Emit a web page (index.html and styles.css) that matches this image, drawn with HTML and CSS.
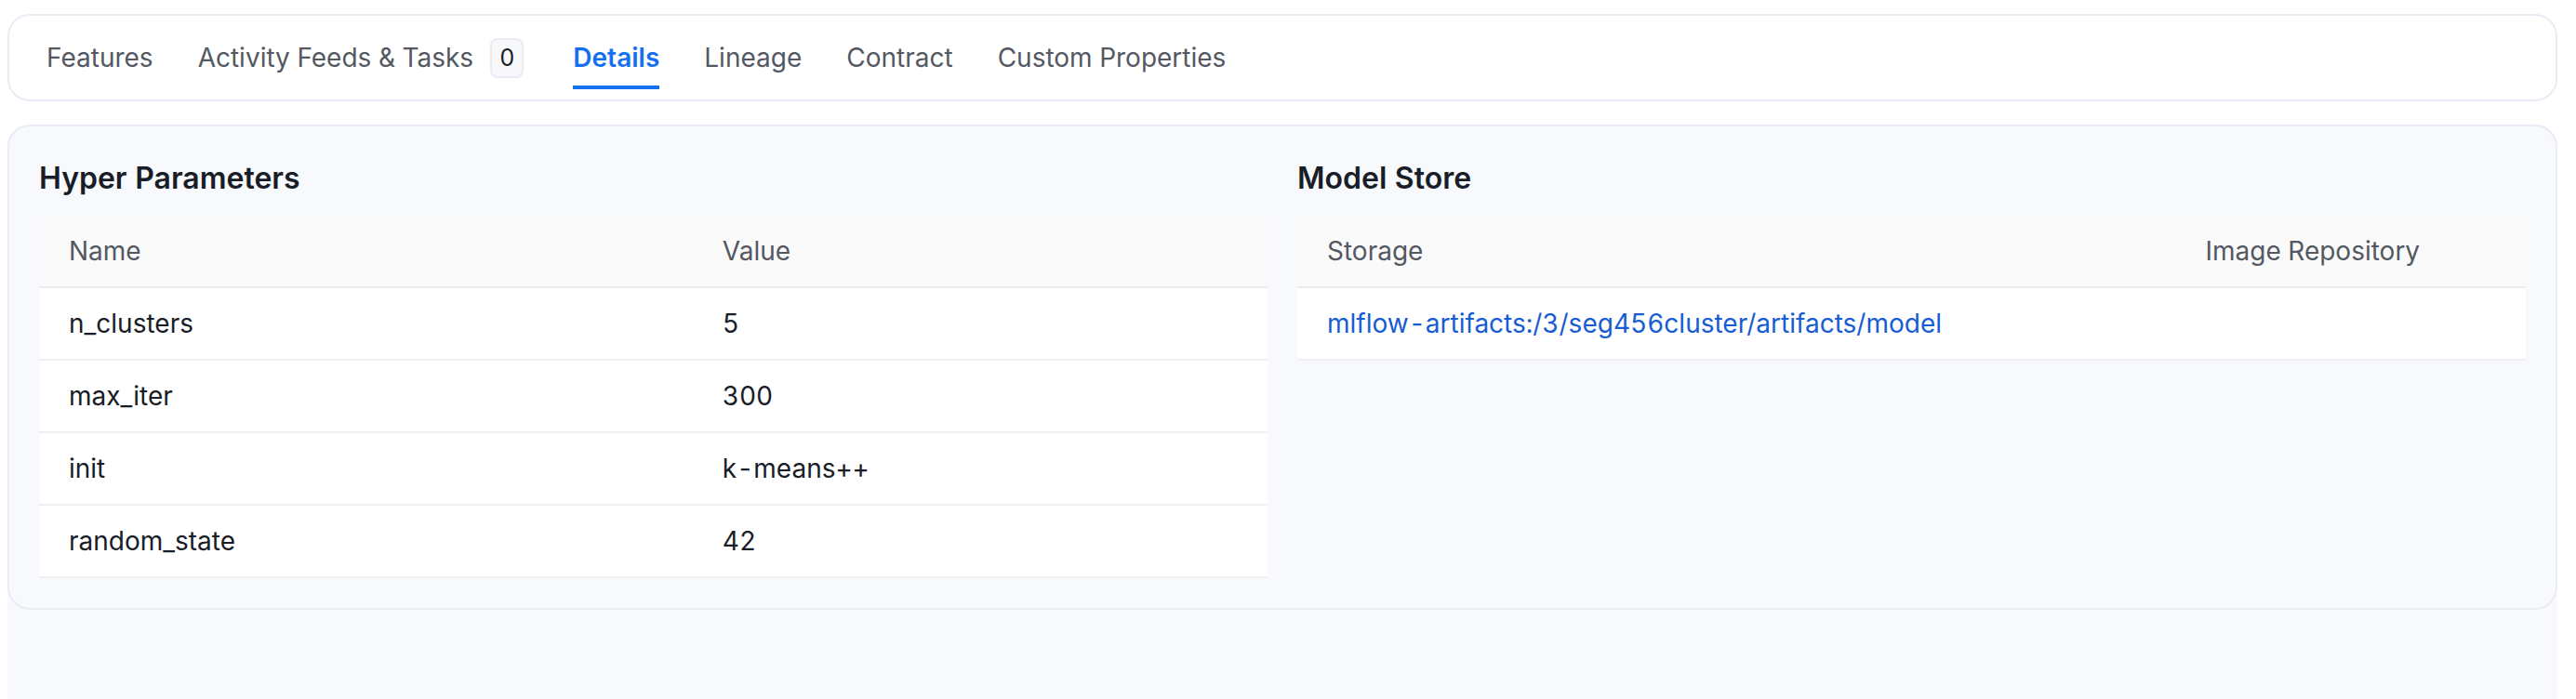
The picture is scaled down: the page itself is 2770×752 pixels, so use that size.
FILE: index.html
```html
<!DOCTYPE html>
<html lang="en">
<head>
<meta charset="utf-8">
<title>Model Details</title>
<link rel="stylesheet" href="styles.css">
</head>
<body>
<div class="page">
  <nav class="tabs">
    <div class="tab">Features</div>
    <div class="tab">Activity Feeds &amp; Tasks <span class="badge">0</span></div>
    <div class="tab active">Details</div>
    <div class="tab">Lineage</div>
    <div class="tab">Contract</div>
    <div class="tab">Custom Properties</div>
  </nav>
  <main class="content">
    <section class="card">
      <div class="panel">
        <h3 class="panel-title">Hyper Parameters</h3>
        <table class="data-table">
          <colgroup><col class="col-name"><col></colgroup>
          <thead>
            <tr><th>Name</th><th>Value</th></tr>
          </thead>
          <tbody>
            <tr><td>n_clusters</td><td>5</td></tr>
            <tr><td>max_iter</td><td>300</td></tr>
            <tr><td>init</td><td>k-means++</td></tr>
            <tr><td>random_state</td><td>42</td></tr>
          </tbody>
        </table>
      </div>
      <div class="panel">
        <h3 class="panel-title">Model Store</h3>
        <table class="data-table">
          <colgroup><col class="col-storage"><col></colgroup>
          <thead>
            <tr><th>Storage</th><th>Image Repository</th></tr>
          </thead>
          <tbody>
            <tr><td><a class="link" href="#">mlflow-artifacts:/3/seg456cluster/artifacts/model</a></td><td></td></tr>
          </tbody>
        </table>
      </div>
    </section>
  </main>
</div>
</body>
</html>
```

FILE: styles.css
```css
html, body {
  margin: 0;
  padding: 0;
  background: #ffffff;
}

body {
  font-family: Inter, "Noto Sans", sans-serif;
  font-feature-settings: "tnum";
  font-variant: tabular-nums;
}

.page {
  height: 100vh;
  box-sizing: border-box;
  padding: 15px 20px 0 8px;
  display: flex;
  flex-direction: column;
  gap: 25px;
}

.tabs {
  flex: none;
  height: 94px;
  box-sizing: border-box;
  border: 2px solid #eaecf5;
  border-radius: 24px;
  background: #ffffff;
  display: flex;
  align-items: center;
  padding-left: 40px;
  gap: 48px;
}

.tab {
  height: 68px;
  box-sizing: border-box;
  padding-top: 4px;
  border-bottom: 4px solid transparent;
  display: flex;
  align-items: center;
  gap: 18px;
  font-size: 28px;
  color: #535862;
  white-space: nowrap;
}

.tab.active {
  color: #1570ef;
  font-weight: 600;
  border-bottom-color: #1570ef;
}

.badge {
  box-sizing: border-box;
  height: 43px;
  min-width: 35px;
  padding: 0 8px;
  margin-right: 5px;
  border: 2px solid #eaecf5;
  border-radius: 8px;
  background: #f8f8fa;
  color: #181d27;
  font-size: 25px;
  display: flex;
  align-items: center;
  justify-content: center;
}

.content {
  flex: 1;
  background: #f8f9fc;
  border-radius: 24px 24px 0 0;
}

.card {
  border: 2px solid #eaecf5;
  border-radius: 24px;
  padding: 32px;
  display: grid;
  grid-template-columns: 1fr 1fr;
  gap: 32px;
}

.panel-title {
  margin: 0 0 16px;
  font-size: 32px;
  line-height: 48px;
  font-weight: 600;
  color: #181d27;
}

.data-table {
  width: 100%;
  table-layout: fixed;
  border-collapse: separate;
  border-spacing: 0;
  font-size: 28px;
}

.col-name { width: 53.2%; }
.col-storage { width: 71.5%; }

.data-table th,
.data-table td {
  padding: 22px 32px;
  line-height: 32px;
  text-align: left;
  white-space: nowrap;
}

.data-table th {
  background: #fafafa;
  color: #535862;
  font-weight: 400;
  border-bottom: 2px solid #ebebeb;
}

.data-table td {
  background: #ffffff;
  color: #181d27;
  border-bottom: 2px solid #f0f0f0;
}

.link {
  color: #175cd3;
  text-decoration: none;
}
```
